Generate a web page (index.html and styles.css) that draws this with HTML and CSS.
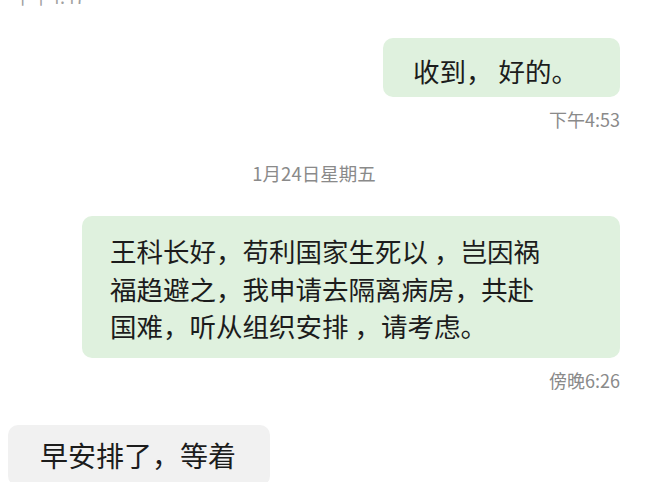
FILE: index.html
```html
<!DOCTYPE html>
<html lang="zh-CN">
<head>
	<meta charset="UTF-8">
	<title>聊天记录</title>
	<link rel="stylesheet" href="styles.css">
</head>
<body>
	<div class="chat">
		<div class="peek"><span>下午4:47</span></div>

		<div class="row me">
			<div class="bubble green first">收到， 好的。</div>
		</div>
		<div class="stamp">下午4:53</div>

		<div class="date">1月24日星期五</div>

		<div class="row me">
			<div class="bubble green long">王科长好，苟利国家生死以 ，岂因祸<br>福趋避之，我申请去隔离病房，共赴<br>国难，听从组织安排 ，请考虑。</div>
		</div>
		<div class="stamp">傍晚6:26</div>

		<div class="row">
			<div class="bubble gray last">早安排了，等着</div>
		</div>
	</div>
</body>
</html>
```

FILE: styles.css
```css
html,body{margin:0;padding:0;background:#fff;}
body{font-family:"Noto Sans CJK SC","Noto Sans",sans-serif;color:#1c1c1c;overflow:hidden;}

.chat{padding:0 25px 0 8px;}

.peek{height:6px;overflow:hidden;padding-left:6px;}
.peek span{display:block;margin-top:-13px;font-size:18px;line-height:18px;color:#a0a0a0;}

.row{display:flex;}
.row.me{justify-content:flex-end;}

.bubble{font-size:26.5px;line-height:37.5px;border-radius:10px;}
.bubble.green{background:#dff1de;}
.bubble.gray{background:#f1f1f1;}

.bubble.first{margin-top:32px;padding:14px 42px 7.5px 30px;}
.bubble.long{margin-top:33px;padding:16px 40px 13px 28px;width:470px;}
.bubble.last{margin-top:35px;padding:12px 34px 12px 32px;font-size:28px;}

.stamp{margin-top:12px;text-align:right;font-size:18px;line-height:20px;color:#8a8a8a;}
.date{margin-top:34px;text-align:center;font-size:18.5px;line-height:20px;color:#8a8a8a;}
```
